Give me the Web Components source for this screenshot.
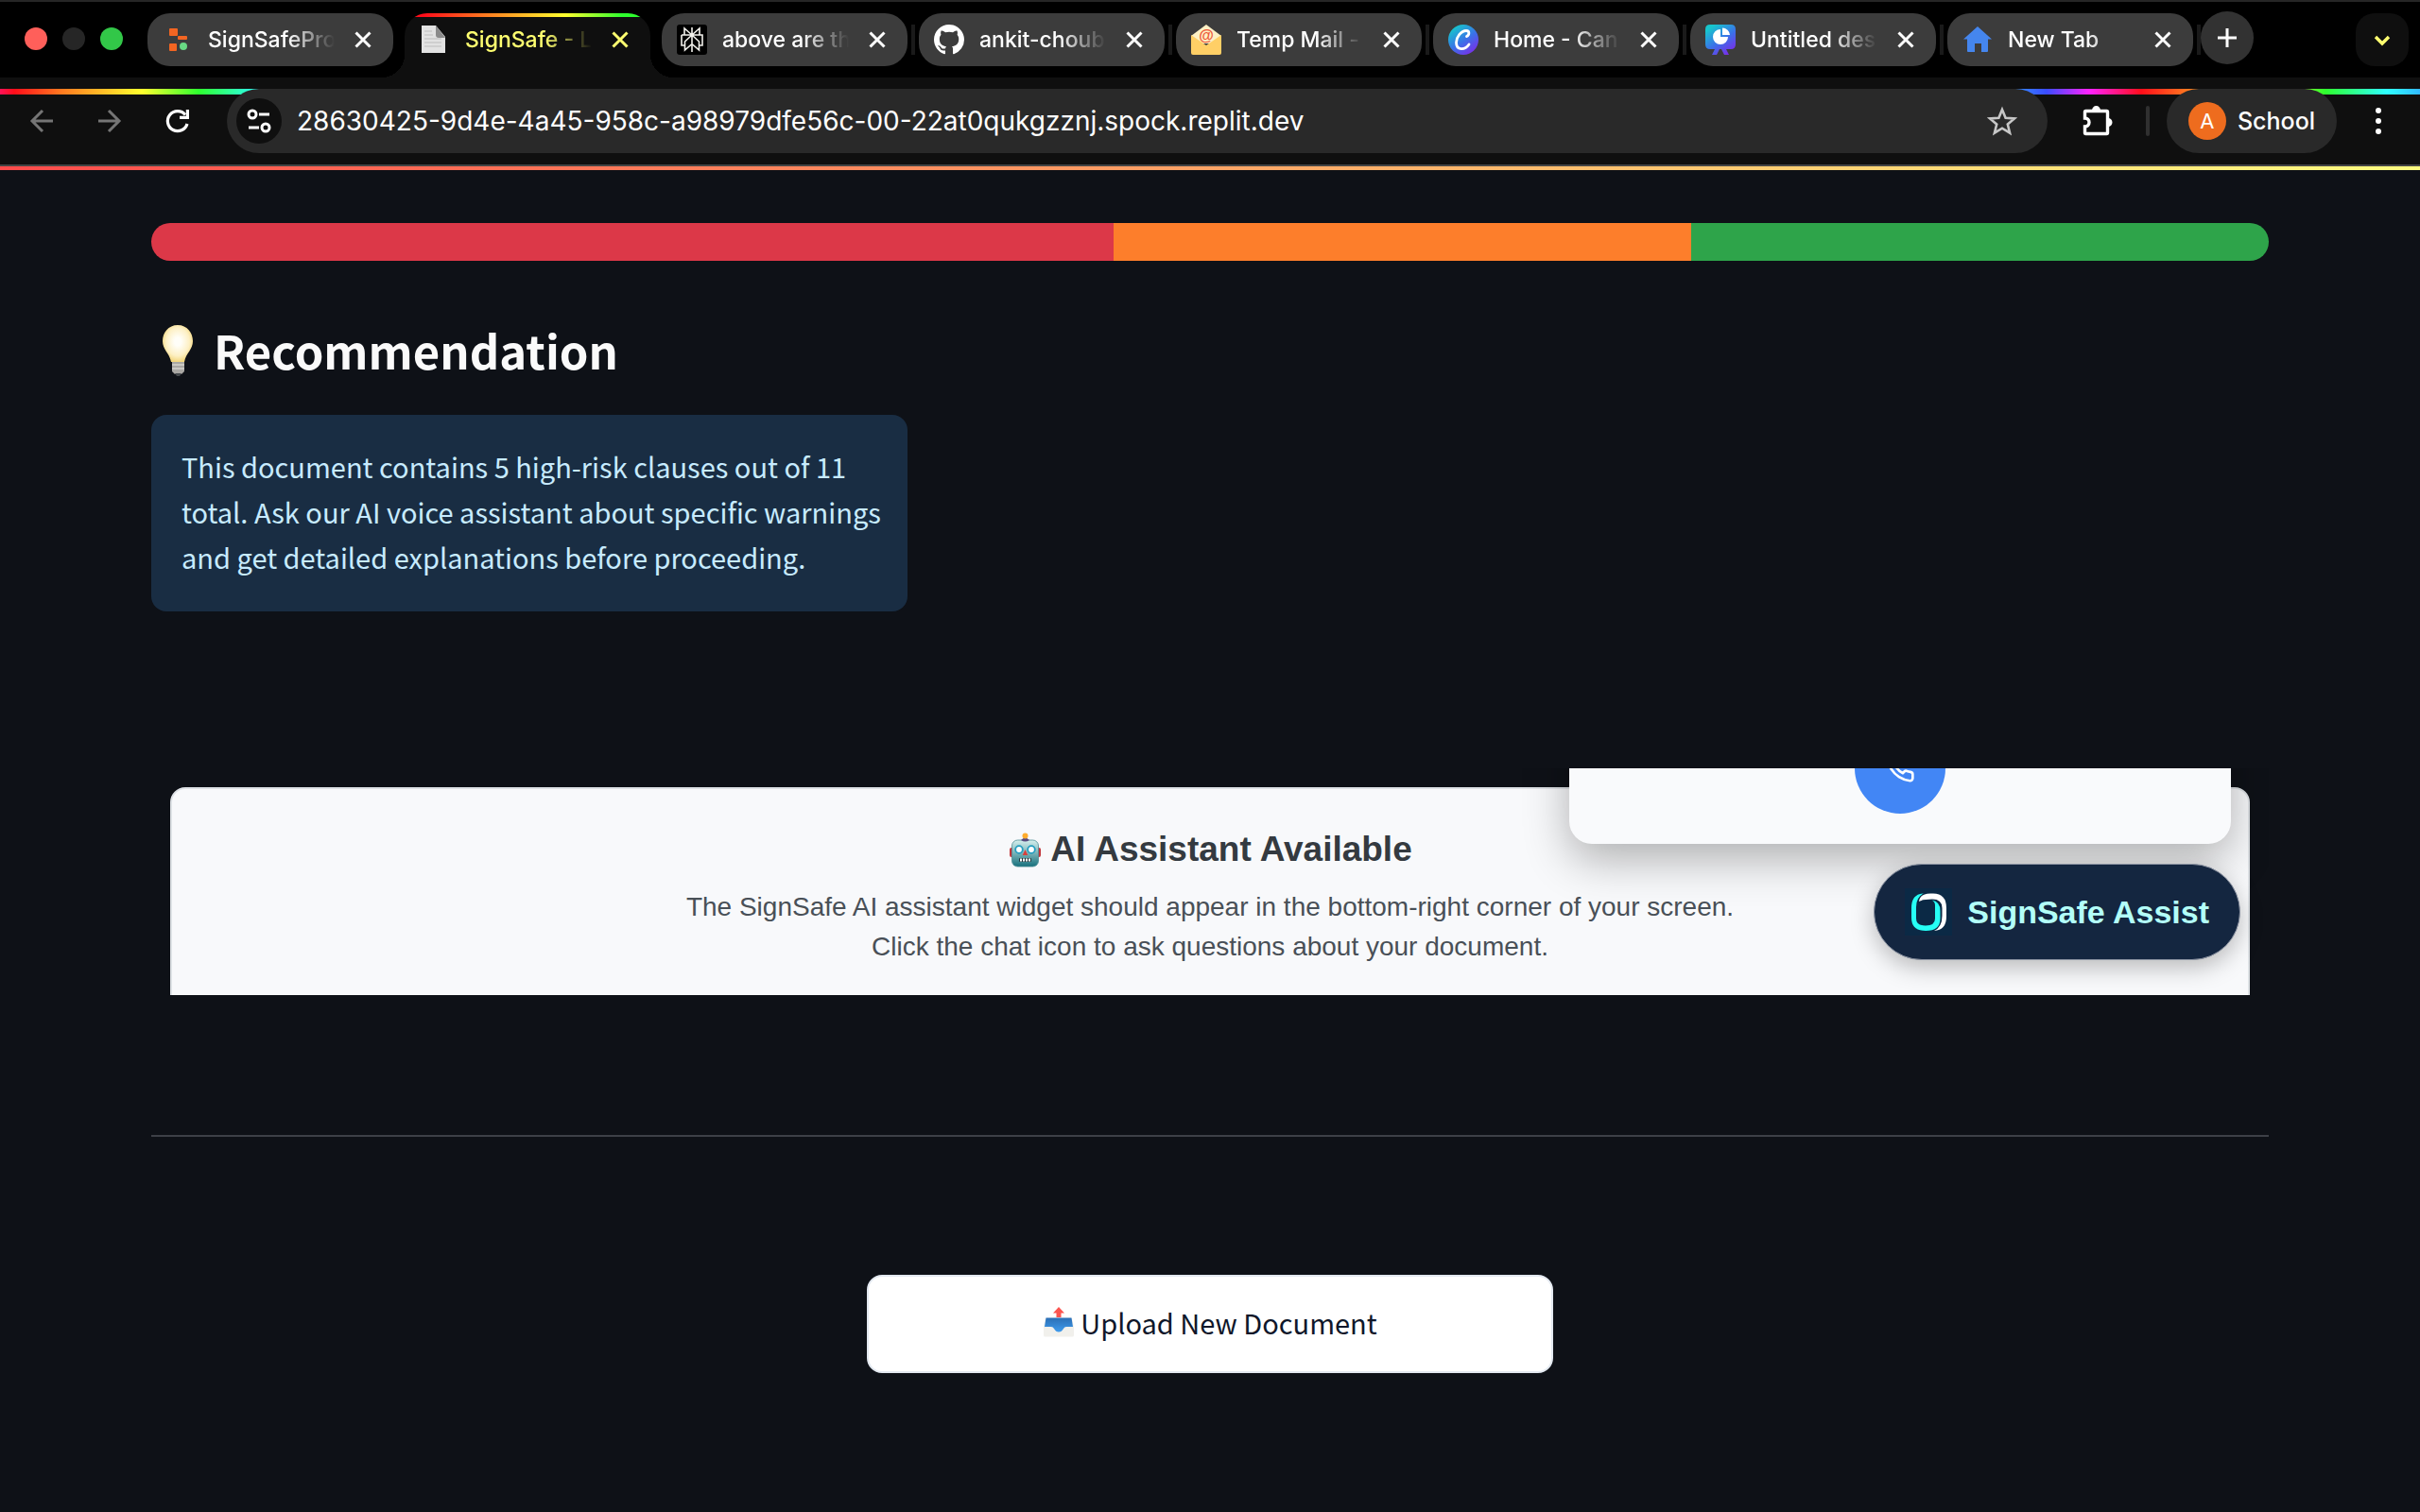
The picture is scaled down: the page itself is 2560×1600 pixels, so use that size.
<!DOCTYPE html>
<html lang="en">
<head>
<meta charset="utf-8">
<title>SignSafe</title>
<style>
  html, body { margin: 0; padding: 0; background: #0e1117; }
  body { min-height: 100vh; font-family: "Noto Sans CJK SC", "Open Sans", sans-serif; }
</style>
</head>
<body>
<browser-chrome>
  <browser-tab slot="tabs" label="SignSafePro">
    <svg slot="icon" width="32" height="32" viewBox="0 0 32 32"><rect x="7" y="4" width="9" height="8" rx="1" fill="#f26522"/><rect x="16" y="12" width="10" height="4" rx="1" fill="#f26522"/><rect x="7" y="20" width="8" height="8" rx="1" fill="#f26522"/><circle cx="22" cy="23" r="4" fill="#68d984"/></svg>
  </browser-tab>
  <browser-tab slot="tabs" label="SignSafe - L" active>
    <svg slot="icon" width="32" height="32" viewBox="0 0 32 32"><path d="M2 1h15l10 12v17H2z" fill="#e2e2e2"/><path d="M17 1l10 13h-7q-3 0-3-3z" fill="#8a8a8a"/><path d="M5 7h8M5 11h9M5 15h18M5 19h18M5 23h18" stroke="#cfcfcf" stroke-width="2"/></svg>
  </browser-tab>
  <browser-tab slot="tabs" label="above are th">
    <svg slot="icon" width="32" height="32" viewBox="0 0 32 32"><rect width="32" height="32" rx="3" fill="#000"/><g fill="none" stroke="#f2f1ec" stroke-width="1.6"><path d="M16 3v26M16 11L8 4v7M16 11l8-7v7M5 11h22v11h-3.500M5 11v11h3.500M16 11l-7.500 7v9L16 20.500l7.500 6.500v-9z"/></g></svg>
  </browser-tab>
  <browser-tab slot="tabs" label="ankit-choub">
    <svg slot="icon" width="32" height="32" viewBox="0 0 16 16"><path fill="#fff" d="M8 0C3.580 0 0 3.580 0 8c0 3.540 2.290 6.530 5.470 7.590.4.070.55-.17.55-.38 0-.19-.01-.82-.01-1.490-2.010.37-2.530-.49-2.690-.94-.09-.23-.48-.94-.82-1.130-.28-.15-.68-.52-.01-.53.63-.01 1.080.58 1.230.82.72 1.210 1.870.87 2.330.66.070-.52.28-.87.51-1.070-1.780-.2-3.640-.89-3.640-3.950 0-.87.31-1.590.82-2.150-.080-.2-.36-1.020.080-2.120 0 0 .67-.21 2.200.82.640-.18 1.320-.27 2-.27s1.360.09 2 .27c1.530-1.040 2.200-.82 2.200-.82.44 1.100.16 1.920.080 2.120.51.56.82 1.270.82 2.150 0 3.070-1.870 3.750-3.650 3.950.29.25.54.73.54 1.480 0 1.070-.01 1.930-.01 2.200 0 .21.15.46.55.38A8.010 8.010 0 0 0 16 8c0-4.420-3.580-8-8-8z"/></svg>
  </browser-tab>
  <browser-tab slot="tabs" label="Temp Mail -">
    <svg slot="icon" width="32" height="32" viewBox="0 0 32 32"><path d="M0 12L16 0l16 12v8H0z" fill="#fdf0c4"/><text x="16" y="17" font-family="Liberation Sans, sans-serif" font-size="16" font-weight="700" text-anchor="middle" fill="#ee5a3a">@</text><path d="M0 11l16 11 16-11v19q0 2-2 2H2q-2 0-2-2z" fill="#ffcf66"/></svg>
  </browser-tab>
  <browser-tab slot="tabs" label="Home - Can">
    <svg slot="icon" width="32" height="32" viewBox="0 0 32 32"><defs><linearGradient id="cv" x1=".1" y1="0" x2=".8" y2="1"><stop offset=".1" stop-color="#17c5cc"/><stop offset=".55" stop-color="#3a72e8"/><stop offset="1" stop-color="#7d2ae8"/></linearGradient></defs><circle cx="16" cy="16" r="16" fill="url(#cv)"/><path d="M19.500 12.500c3-1.500 3.500-6-.5-6-5.500 0-10.500 7-10.500 12.500 0 8.500 9 8.500 13.500 2" fill="none" stroke="#fff" stroke-width="2.800" stroke-linecap="round"/></svg>
  </browser-tab>
  <browser-tab slot="tabs" label="Untitled des">
    <svg slot="icon" width="32" height="32" viewBox="0 0 32 32"><defs><linearGradient id="un" x1=".1" y1="0" x2=".8" y2="1"><stop offset=".1" stop-color="#17c5cc"/><stop offset=".55" stop-color="#3a72e8"/><stop offset="1" stop-color="#7d2ae8"/></linearGradient></defs><path d="M5 0h22q5 0 5 5v16q0 5-5 5h-5l3 6h-5l-3-6h-2l-3 6H7l3-6H5q-5 0-5-5V5q0-5 5-5z" fill="url(#un)"/><path d="M16 5a8 8 0 1 0 8 8h-8z" fill="#fff"/><path d="M18 3.500a8 8 0 0 1 8 7.500h-8z" fill="#fff"/></svg>
  </browser-tab>
  <browser-tab slot="tabs" label="New Tab">
    <svg slot="icon" width="32" height="32" viewBox="0 0 32 32"><path d="M16 2l15 13.500h-4V28q0 1-1 1h-6v-9h-7v9H6q-1 0-1-1V15.500H1z" fill="#4586ee"/></svg>
  </browser-tab>
</browser-chrome>

<signsafe-page>
  <risk-bar></risk-bar>
  <info-note heading="Recommendation">This document contains 5 high-risk clauses out of 11 total. Ask our AI voice assistant about specific warnings and get detailed explanations before proceeding.</info-note>
  <assistant-frame></assistant-frame>
  <upload-section>Upload New Document</upload-section>
</signsafe-page>

<script>
const define = (name, html, ready) => customElements.define(name, class extends HTMLElement {
  constructor() {
    super();
    const t = document.createElement('template');
    t.innerHTML = html;
    this.attachShadow({ mode: 'open' }).append(t.content.cloneNode(true));
  }
  connectedCallback() { if (ready) ready.call(this, this.shadowRoot); }
});

define('browser-tab', `
<style>
  :host { display: flex; flex: 1 1 0; min-width: 0; box-sizing: border-box; align-items: center; height: 56px; padding: 0 20px 0 16px;
    border-radius: 24px; background: #3c3c3c; color: #fff; font-family: Inter, sans-serif; font-size: 23px; font-weight: 500; }
  :host([active]) { position: relative; height: 68px; padding-bottom: 12px; border-radius: 24px 24px 0 0; color: #ffff70;
    background: linear-gradient(90deg, #ff0d1a 20px, #ff7a20 85px, #ffff2e 170px, #2eff2e 230px) top / 100% 4px no-repeat, #0f0f0f; }
  :host([active])::before, :host([active])::after { content: ""; position: absolute; bottom: 0; width: 24px; height: 24px; }
  :host([active])::before { right: 100%; background: radial-gradient(circle at 0 0, #0000 24px, #0f0f0f 24px); }
  :host([active])::after { left: 100%; background: radial-gradient(circle at 100% 0, #0000 24px, #0f0f0f 24px); }
  button { border: 0; padding: 0; background: none; color: inherit; font: inherit; }
  ::slotted(svg) { flex: none; margin-right: 16px; }
  .label { flex: 1; min-width: 0; overflow: hidden; text-align: left; white-space: nowrap; line-height: 32px;
    -webkit-mask-image: linear-gradient(90deg, #000 calc(100% - 68px), #0000 calc(100% - 18px)); mask-image: linear-gradient(90deg, #000 calc(100% - 68px), #0000 calc(100% - 18px)); }
  .close { display: flex; flex: none; }
</style>
<slot name="icon"></slot><button class="label"></button>
<button class="close" aria-label="Close tab"><svg width="24" height="24" viewBox="0 0 24 24"><path d="M4.500 4.500l15 15M19.500 4.500l-15 15" stroke="currentColor" stroke-width="3"/></svg></button>`,
function (root) { root.querySelector('.label').textContent = this.getAttribute('label'); });

define('browser-chrome', `
<style>
  :host { display: block; color: #fff; font-family: Inter, sans-serif; }
  button { display: flex; align-items: center; justify-content: center; border: 0; padding: 0; background: none; color: inherit; font: inherit; }
  .strip { display: flex; align-items: flex-start; height: 68px; padding: 12px 12px 0 26px; border-top: 2px solid #262626; background: #000; }
  .lights { display: flex; flex: none; gap: 16px; width: 130px; padding-top: 15px; }
  .lights i { width: 24px; height: 24px; border-radius: 50%; background: #ff5f5a; }
  .lights i:nth-child(2) { background: #262626; }
  .lights i:nth-child(3) { background: #32c748; }
  .tabs { display: flex; flex: 0 1 2172px; box-sizing: border-box; gap: 12px; min-width: 0; padding-right: 8px;
    background: repeating-linear-gradient(90deg, #0000 0 264px, #1a1a1a 264px 268px, #0000 268px 272px) 544px 12px / 100% 32px no-repeat; }
  .plus { flex: none; width: 56px; height: 56px; margin: -2px auto 0 0; border-radius: 50%; background: #323232; }
  .more { flex: none; width: 56px; height: 56px; border-radius: 20px; background: #0f0f0f; }
  .bar { display: flex; align-items: center; height: 68px; padding: 12px 40px 12px 28px;
    background: repeating-linear-gradient(90deg, #ff0d1a 15px, #ff7a20 65px, #ffff2e 150px, #2eff2e 210px, #2effff 275px, #3a4cff 365px, #ff22ff 410px, #ff0d1a 465px) 0 12px / 100% 6px no-repeat, #0f0f0f; }
  nav { display: flex; gap: 40px; margin-right: 36px; }
  .omni { display: flex; flex: 1; align-items: center; height: 68px; box-sizing: border-box; padding: 0 32px 0 10px; border-radius: 34px; background: #292929; }
  .site { flex: none; width: 48px; height: 48px; border-radius: 50%; background: #0f0f0f; }
  input { flex: 1; min-width: 0; margin: 0 16px; padding: 0; border: 0; outline: 0; background: none; color: #fff; font: 400 28px/40px Inter, sans-serif; }
  .ext { margin: 0 34px 0 36px; }
  .sep { width: 4px; height: 32px; margin-right: 18px; border-radius: 2px; background: #303030; }
  .profile { gap: 12px; width: 180px; height: 68px; margin-right: 40px; border-radius: 34px; background: #292929; font-size: 25px; font-weight: 500; }
  .profile b { width: 40px; height: 40px; border-radius: 50%; background: #ee6c1e; font-size: 22px; font-weight: 400; line-height: 40px; }
  .line { height: 4px; border-top: 2px solid #444; background: linear-gradient(90deg, #ff4b4b, #fffd80); }
</style>
<div class="strip">
  <div class="lights"><i></i><i></i><i></i></div>
  <div class="tabs"><slot name="tabs"></slot></div>
  <button class="plus" aria-label="New tab"><svg width="24" height="24" viewBox="0 0 24 24"><path d="M12 2v20M2 12h20" stroke="#fff" stroke-width="3"/></svg></button>
  <button class="more" aria-label="Search tabs"><svg width="24" height="24" viewBox="0 0 24 24"><path d="M5 9l7 7 7-7" fill="none" stroke="#ffff70" stroke-width="3.400"/></svg></button>
</div>
<div class="bar">
  <nav>
    <button aria-label="Back"><svg width="32" height="32" viewBox="0 0 32 32"><path d="M28 16H6M17 5L6 16l11 11" fill="none" stroke="#757575" stroke-width="3"/></svg></button>
    <button aria-label="Forward"><svg width="32" height="32" viewBox="0 0 32 32"><path d="M4 16h22M15 5l11 11-11 11" fill="none" stroke="#757575" stroke-width="3"/></svg></button>
    <button aria-label="Reload"><svg width="32" height="32" viewBox="0 0 32 32"><path d="M26 19a10.500 10.500 0 1 1-2-9.500" fill="none" stroke="#fff" stroke-width="3.200"/><path d="M28 4v10H18v-3.200h6.800V4z" fill="#fff"/></svg></button>
  </nav>
  <div class="omni">
    <button class="site" aria-label="Site information"><svg width="28" height="28" viewBox="0 0 28 28" fill="none" stroke="#fff" stroke-width="3"><circle cx="7" cy="7" r="4"/><path d="M14 7h11M3 21h11"/><circle cx="21" cy="21" r="4"/></svg></button>
    <input aria-label="Address" value="28630425-9d4e-4a45-958c-a98979dfe56c-00-22at0qukgzznj.spock.replit.dev">
    <button aria-label="Bookmark"><svg width="32" height="32" viewBox="0 0 32 32"><path d="M16 4l3.600 8.700 9.400.7-7.200 6.100 2.300 9.200-8.100-5-8.100 5 2.300-9.200L3 13.400l9.400-.7z" fill="none" stroke="#c7c7c7" stroke-width="2.600"/></svg></button>
  </div>
  <button class="ext" aria-label="Extensions"><svg width="34" height="32" viewBox="0 0 34 32"><path d="M3.500 6.500q0-1 1-1h22q1 0 1 1v22q0 1-1 1h-22q-1 0-1-1v-6.500a4.500 4.500 0 0 0 0-9z" fill="none" stroke="#fff" stroke-width="3.400"/><path d="M11 5a4.500 5 0 0 1 9 0zM28 13a4.500 4.500 0 0 1 0 9z" fill="#fff"/></svg></button>
  <div class="sep"></div>
  <button class="profile"><b>A</b><span>School</span></button>
  <button aria-label="Menu"><svg width="8" height="32" viewBox="0 0 8 32" fill="#fff"><circle cx="4" cy="5" r="3"/><circle cx="4" cy="16" r="3"/><circle cx="4" cy="27" r="3"/></svg></button>
</div>
<div class="line"></div>`);

define('signsafe-page', `
<style>
  :host { display: block; padding: 56px 160px 80px; color: #fafafa; }
</style>
<slot></slot>`);

define('risk-bar', `
<style>
  :host { display: flex; height: 40px; border-radius: 20px; overflow: hidden; }
  div { flex: 3; background: #fd7e2b; }
  .high { flex: 5; background: #dc3848; }
  .low { background: #2ea44a; }
</style>
<div class="high"></div><div></div><div class="low"></div>`);

define('info-note', `
<style>
  :host { display: block; margin-top: 60px; }
  h2 { display: flex; align-items: center; gap: 10px; margin: 0 0 35px; font-size: 49px; font-weight: 700; line-height: 68px; }
  .note { box-sizing: border-box; width: 800px; max-width: 100%; padding: 30px 20px 34px 32px; border-radius: 16px; background: #192d43; color: #c7ebff; font-size: 29px; line-height: 48px; }
</style>
<h2><svg width="56" height="56" viewBox="0 0 56 56" role="img" aria-label="Light bulb"><defs><radialGradient id="g" cx=".5" cy=".45" r=".55"><stop offset=".2" stop-color="#fffef8"/><stop offset=".7" stop-color="#fdf0c4"/><stop offset="1" stop-color="#f3d67c"/></radialGradient></defs><path d="M28 2C18 2 12 10 12 19c0 9 7 12 9 22h14c2-10 9-13 9-22C44 10 38 2 28 2z" fill="url(#g)"/><path d="M22 41h13v10l-3 3h-7l-3-3z" fill="#a9a7a3"/><path d="M22 44h13M22 48h13" stroke="#d5d3ce" stroke-width="1.600"/><path d="M25 53h7l-2 3h-3z" fill="#44484c"/></svg><span></span></h2>
<div class="note"><slot></slot></div>`,
function (root) { root.querySelector('span').textContent = this.getAttribute('heading'); });

define('assistant-frame', `
<style>
  :host { display: block; position: relative; box-sizing: border-box; height: 240px; margin-top: 166px; padding: 20px; overflow: hidden; font-family: "Liberation Sans", Arial, sans-serif; }
  .card { box-sizing: border-box; height: 260px; padding: 40px; border: 2px solid #dee2e6; border-radius: 16px; background: #f8f9fb; text-align: center; }
  h3 { display: flex; align-items: center; justify-content: center; gap: 8px; margin: 0 0 16px; color: #343a40; font-size: 37px; line-height: 48px; }
  p { margin: 0; color: #495057; font-size: 28px; line-height: 42px; }
  .call { position: absolute; right: 40px; bottom: 160px; display: flex; align-items: flex-end; justify-content: center; box-sizing: border-box; width: 700px; height: 200px; padding-bottom: 32px; border-radius: 24px; background: #f9fafc; box-shadow: 0 16px 48px rgba(0,0,0,.3); }
  .call button { display: flex; align-items: center; justify-content: center; width: 96px; height: 96px; padding: 0; border: 0; border-radius: 50%; background: #4286f5; }
  .assist { position: absolute; right: 30px; bottom: 37px; display: flex; align-items: center; gap: 16px; height: 102px; padding: 0 32px; border: 1px solid #8d94a3; border-radius: 51px; background: #142640; color: #b3fff8; font: 700 34px/40px "Liberation Sans", Arial, sans-serif; box-shadow: 0 8px 24px rgba(0,0,0,.25); }
</style>
<div class="card">
  <h3><svg width="37" height="37" viewBox="0 0 37 37" role="img" aria-label="Robot"><defs><linearGradient id="r" x1="0" y1="0" x2="0" y2="1"><stop offset="0" stop-color="#d6f0ee"/><stop offset=".45" stop-color="#82b9bd"/><stop offset="1" stop-color="#16707c"/></linearGradient></defs><rect x="2" y="16" width="5" height="10" rx="2" fill="#c2363c"/><rect x="30" y="16" width="5" height="10" rx="2" fill="#c2363c"/><rect x="4.500" y="8" width="28" height="28" rx="6" fill="url(#r)" stroke="#4f8f97" stroke-width=".8"/><path d="M14 8q4.500-5 9 0-4.500 3-9 0z" fill="#584a80"/><circle cx="18.500" cy="3.500" r="3" fill="#ffac2e"/><g fill="#fff" stroke="#239dc0" stroke-width="1.800"><circle cx="12" cy="18" r="3.800"/><circle cx="25" cy="18" r="3.800"/></g><path d="M18.500 18l2.800 6h-5.600z" fill="#d9403c"/><rect x="12" y="27" width="13" height="4" rx="1" fill="#20383e"/><path d="M13 29h11" stroke="#fff" stroke-width="3" stroke-dasharray="2 1"/></svg><span>AI Assistant Available</span></h3>
  <p>The SignSafe AI assistant widget should appear in the bottom-right corner of your screen.<br>Click the chat icon to ask questions about your document.</p>
</div>
<div class="call"><button aria-label="Start call"><svg width="32" height="32" viewBox="0 0 24 24" fill="none" stroke="#fff" stroke-width="2" stroke-linecap="round" stroke-linejoin="round"><path d="M22 16.920v3a2 2 0 0 1-2.180 2 19.790 19.790 0 0 1-8.630-3.070 19.500 19.500 0 0 1-6-6 19.790 19.790 0 0 1-3.070-8.670A2 2 0 0 1 4.110 2h3a2 2 0 0 1 2 1.720 12.840 12.840 0 0 0 .7 2.810 2 2 0 0 1-.45 2.110L8.090 9.910a16 16 0 0 0 6 6l1.270-1.270a2 2 0 0 1 2.110-.45 12.840 12.840 0 0 0 2.810.7A2 2 0 0 1 22 16.920z"/></svg></button></div>
<button class="assist"><svg width="50" height="50" viewBox="0 0 50 50"><rect width="50" height="50" fill="#0b2945"/><path d="M15 14Q16 5.500 27 5.500h3Q44 5.500 44 21v9Q44 44 31 45Q39.500 41 39.500 29v-8Q39.500 11.500 29 11.500Q19 11.500 15 14z" fill="#fff"/><path fill-rule="evenodd" d="M20 5.500Q12 9 12 20v12Q12 39.500 22 39.500Q32 39.500 32 32V18Q32 14 28.500 12.500Q37.500 14 37.500 24v8Q37.500 45 22 45Q7 45 7 31V21Q7 6 20 5.500z" fill="#26fff5"/></svg><span>SignSafe Assist</span></button>`);

define('upload-section', `
<style>
  :host { display: block; }
  hr { height: 2px; margin: 148px 0 146px; border: 0; background: #3d4047; }
  .row { display: grid; grid-template-columns: 1fr 1fr 1fr; gap: 32px; }
  button { grid-column: 2; display: flex; align-items: center; justify-content: center; gap: 6px; box-sizing: border-box; height: 104px; padding: 0 24px 4px; border: 2px solid #e2e8f0; border-radius: 16px; background: #fff; color: #0f172a; font: 400 29px/48px "Noto Sans CJK SC", "Open Sans", sans-serif; }
</style>
<hr>
<div class="row"><button><svg width="34" height="34" viewBox="0 0 34 34" role="img" aria-label="Outbox tray"><defs><linearGradient id="b" x1="0" y1="0" x2="0" y2="1"><stop offset="0" stop-color="#2b6fb5"/><stop offset="1" stop-color="#3f9bed"/></linearGradient></defs><path d="M3 13h28l2 9v9q0 1.500-1.500 1.500h-29Q1 32.500 1 31v-9z" fill="#f1f0ec"/><path d="M3.500 12.500h27L32 22h-7q-2 0-3 2-2 3.500-5 3.500T12 24q-1-2-3-2H2z" fill="url(#b)"/><path d="M17 1l6 6.500h-3.500V12h-5V7.500H11z" fill="#fb5550"/></svg><span><slot></slot></span></button></div>`);
</script>
</body>
</html>
